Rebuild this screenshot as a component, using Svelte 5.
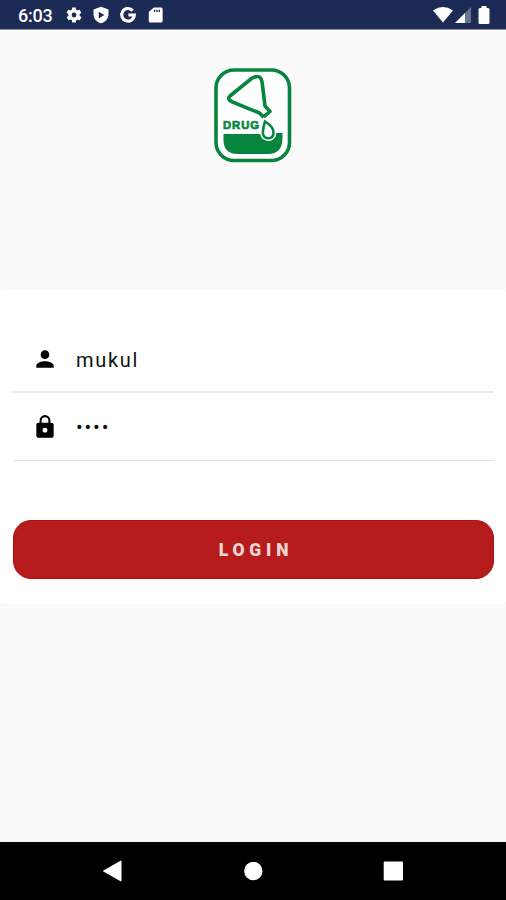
<script lang="ts">
  let username = $state('mukul');
  let password = $state('1234');

  const masked = $derived('•'.repeat(password.length));
</script>

<div class="screen">
  <header class="status">
    <span class="time">6:03</span>
    <svg class="gear" width="18" height="18" viewBox="0 0 24 24" aria-hidden="true">
      <path fill-rule="evenodd" d="M19.4 13c.1-.3.1-.7.1-1s0-.7-.1-1l2.1-1.6c.2-.2.3-.4.1-.7l-2-3.4c-.1-.2-.4-.3-.6-.2l-2.5 1c-.5-.4-1.1-.7-1.7-1l-.4-2.6c0-.3-.2-.5-.5-.5h-4c-.2 0-.4.2-.5.5l-.4 2.6c-.6.3-1.2.6-1.700 1l-2.5-1c-.2-.1-.5 0-.6.2l-2 3.4c-.1.3-.1.5.1.7L4.6 11c-.1.3-.1.7-.1 1s0 .7.1 1l-2.1 1.6c-.2.2-.2.4-.1.7l2 3.4c.1.2.4.3.6.2l2.5-1c.5.4 1.1.7 1.7 1l.4 2.600c0 .3.3.5.5.5h4c.3 0 .5-.2.5-.5l.4-2.600c.6-.3 1.2-.6 1.700-1l2.5 1c.2.1.5 0 .6-.2l2-3.4c.1-.3.1-.5-.1-.7zM12 15.2a3.200 3.200 0 1 1 0-6.400 3.200 3.200 0 0 1 0 6.400z" />
    </svg>
    <svg class="shield" width="18" height="18" viewBox="0 0 24 24" aria-hidden="true">
      <path fill-rule="evenodd" d="M12 1 2 4.5V11c0 5.5 4 10.5 10 12 6-1.5 10-6.5 10-12V4.5zM9 7.500l7.500 4.500L9 16.500z" />
    </svg>
    <svg class="google" width="18" height="18" viewBox="0 0 24 24" aria-hidden="true">
      <path d="M18.3 6.2A8.400 8.400 0 1 0 20.400 12H12.500" fill="none" stroke="#fff" stroke-width="4.2" />
    </svg>
    <svg class="sd" width="19" height="18" viewBox="0 0 24 24" preserveAspectRatio="none" aria-hidden="true">
      <path fill-rule="evenodd" d="M19 2h-9L3.500 8v12c0 1.100.9 2 2 2H19c1.100 0 2-.9 2-2V4c0-1.100-.9-2-2-2zM10 5v3h1.700V5zm3 0v3h1.700V5zm3 0v3h1.700V5z" />
    </svg>
    <div class="signals">
      <svg width="20" height="16" viewBox="0 0 20 16" aria-hidden="true">
        <path d="M0 3.400Q10-3.400 20 3.400L10 15.500z" />
      </svg>
      <svg width="16" height="16" viewBox="0 0 16 16" aria-hidden="true">
        <path d="M16 0V16H0z" opacity=".35" />
        <path d="M10 6V16H0z" />
      </svg>
      <svg class="battery" width="12" height="18" viewBox="0 0 12 18" aria-hidden="true">
        <path d="M3.500 0h5v2H10q1.500 0 1.500 1.500v13Q11.500 18 10 18H2Q.5 18 .5 16.500v-13Q.5 2 2 2h1.500z" />
      </svg>
    </div>
  </header>

  <main>
    <div class="brand">
      <svg width="100" height="110" viewBox="0 0 100 110" role="img" aria-label="Drug logo">
        <rect x="11" y="10" width="73.500" height="90.500" rx="18" fill="#fff" stroke="#07853e" stroke-width="3.600" />
        <path d="M25 36 46.500 18.500Q56 13 57.200 23L60 46 65 51.500 58.500 57 54.500 53 27.500 42Q21.500 39.500 25 36z" fill="none" stroke="#07853e" stroke-width="3.600" stroke-linejoin="round" />
        <path d="M18.500 74H55.500C57 81 68 81 70.500 73H77.500V78Q77.500 94 63 94H33Q18.500 94 18.500 80z" fill="#07853e" />
        <path d="M60 61.500C65 64.500 69 69 68.500 73.500 68 79.500 59.500 80 58 74 57.500 70 59 65 60 61.500z" fill="#fff" stroke="#fff" stroke-width="5.500" />
        <path d="M60 61.500C65 64.500 69 69 68.500 73.500 68 79.500 59.500 80 58 74 57.500 70 59 65 60 61.500z" fill="#fff" stroke="#07853e" stroke-width="2.600" />
        <text x="18" y="68.700" textLength="36" lengthAdjust="spacing">DRUG</text>
      </svg>
    </div>

    <section class="card">
      <div class="field">
        <svg width="26" height="26" viewBox="0 0 24 24" aria-hidden="true">
          <path d="M12 12a4 4 0 1 0 0-8 4 4 0 0 0 0 8zm0 2c-2.700 0-8 1.300-8 4v2h16v-2c0-2.700-5.300-4-8-4z" />
        </svg>
        <span class="value">{username}</span>
      </div>
      <div class="field">
        <svg width="26" height="26" viewBox="0 0 24 24" aria-hidden="true">
          <path fill-rule="evenodd" d="M18 8h-1V6A5 5 0 0 0 7 6v2H6a2 2 0 0 0-2 2v10c0 1.100.9 2 2 2h12a2 2 0 0 0 2-2V10a2 2 0 0 0-2-2zm-6 9.300a2.300 2.300 0 1 1 0-4.600 2.300 2.300 0 0 1 0 4.600zm3.100-9.300H8.900V6a3.100 3.100 0 0 1 6.200 0z" />
        </svg>
        <span class="value dots">{masked}</span>
      </div>
      <button type="button">LOGIN</button>
    </section>
  </main>

  <nav>
    <svg width="20" height="22" viewBox="0 0 20 22" aria-label="Back"><path d="M-.5 11 17.500.8Q18.500.4 18.500 1.500v19q0 1.100-1 .7z" /></svg>
    <svg width="20" height="20" viewBox="0 0 20 20" aria-label="Home"><circle cx="10.300" cy="10" r="9.200" /></svg>
    <svg width="20" height="20" viewBox="0 0 20 20" aria-label="Recents"><rect x=".7" y=".5" width="19.300" height="19" rx="1" /></svg>
  </nav>
</div>

<style>
  :global(body) { background: #fafafa; }
  .screen { display: flex; flex-direction: column; height: 900px; background: #fafafa; font-family: Roboto, sans-serif; }
  svg { display: block; flex: none; }

  .status { box-sizing: border-box; display: flex; align-items: center; height: 30px; padding: 1px 16px 0 18px; background: #1b2b55; border-bottom: 1px solid #8d95aa; color: #fff; fill: #fff; }
  .time { width: 47px; padding-top: 2px; font-size: 18px; font-weight: 500; line-height: 26px; letter-spacing: -0.2px; }
  .shield, .google, .sd { margin-left: 9px; }
  .signals { display: flex; align-items: center; margin-left: auto; }
  .signals svg + svg { margin-left: 2px; }
  .signals .battery { margin-left: 7px; }

  main { flex: 1; }
  .brand { display: flex; justify-content: center; height: 229px; padding: 30px 0 0 4px; }
  .brand text { font: 700 11.3px 'Liberation Sans', Arial, sans-serif; fill: #07853e; stroke: #07853e; stroke-width: .7; }

  .card { box-sizing: border-box; height: 315px; padding: 37px 12px 0 13px; background: #fff; border-radius: 4px; box-shadow: 0 0 2px rgba(0, 0, 0, 0.06); }
  .field { box-sizing: border-box; display: flex; align-items: center; gap: 18px; height: 67px; padding-left: 19px; border-bottom: 2px solid #ebebeb; }
  .field + .field { height: 68px; border-bottom-width: 1px; border-color: #dedede; }
  .value { padding-top: 2px; color: #111; font-size: 20px; letter-spacing: 1.7px; }
  .dots { padding-top: 1px; letter-spacing: 1.8px; }

  button { display: block; width: 100%; height: 59px; margin-top: 59px; padding: 0 0 0 5px; border: 1px solid #b00f10; border-radius: 18px; background: #b71c1c; color: #ecd5d5; font: 900 17.5px Roboto, sans-serif; letter-spacing: 4.8px; }

  nav { box-sizing: border-box; display: flex; align-items: center; justify-content: space-between; height: 58px; padding: 0 103px; background: #000; fill: #fff; }
</style>
